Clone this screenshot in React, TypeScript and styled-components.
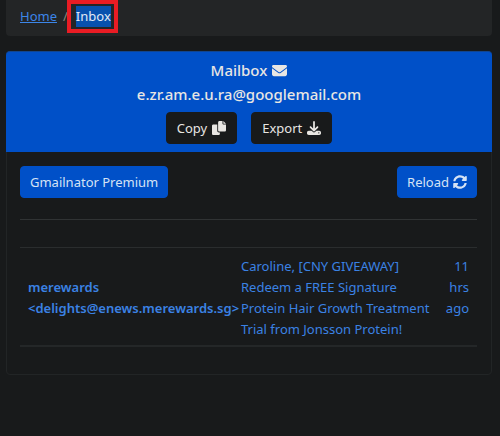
import React from "react";
import styled, { createGlobalStyle } from "styled-components";
import { FaDownload, FaEnvelope } from "react-icons/fa6";
import { FaSyncAlt } from "react-icons/fa";

const GlobalStyle = createGlobalStyle`
  * { box-sizing: border-box; }
  body {
    margin: 0;
    background: #181a1b;
    color: #e8e6e3;
    font: 13px/21px "Noto Sans", "Open Sans", sans-serif;
  }
`;

const Page = styled.div`
  padding: 0 8px 16px 6px;
`;

const Breadcrumb = styled.nav`
  display: flex;
  align-items: center;
  gap: 6px;
  height: 36px;
  padding: 0 14px 4px;
  background: #232526;
  color: #8d867b;
  border-radius: 0 0 4px 4px;
`;

const HomeLink = styled.a`
  color: #3c86e8;
`;

const Current = styled.span`
  position: relative;
  margin-left: 2px;
  background: #0751ae;
  color: #e0eaf5;
`;

const Highlight = styled.span`
  position: absolute;
  inset: -6px -7px -6px -9px;
  border: 4px solid #e91c24;
`;

const Card = styled.main`
  margin-top: 15px;
  border: 1px solid #222526;
  border-radius: 4px;
`;

const CardHeader = styled.header`
  display: flex;
  flex-direction: column;
  align-items: center;
  margin: -1px -1px 0;
  padding: 6px 14px 8px;
  border-top: 1px solid #12458f;
  border-radius: 4px 4px 0 0;
  background: #0050c8;
`;

const Title = styled.h1`
  display: flex;
  align-items: center;
  gap: 5px;
  margin: 0;
  font-size: 15px;
  line-height: 24px;
  font-weight: 500;
`;

const HeaderActions = styled.div`
  display: flex;
  gap: 14px;
  margin-top: 6px;
`;

const Button = styled.button<{ $dark?: boolean }>`
  display: inline-flex;
  align-items: center;
  gap: ${(p) => (p.$dark ? "5px" : "4px")};
  height: 32px;
  padding: 0 ${(p) => (p.$dark ? "10px" : "9px")};
  border: 1px solid ${(p) => (p.$dark ? "#181a1b" : "#0050c8")};
  border-radius: 4px;
  background: ${(p) => (p.$dark ? "#181a1b" : "#0050c8")};
  color: ${(p) => (p.$dark ? "#e8e6e3" : "#d5e3f5")};
  font: inherit;
  white-space: nowrap;
`;

const CardBody = styled.div`
  padding: 14px 14px 27px 13px;
`;

const Toolbar = styled.div`
  display: flex;
  justify-content: space-between;
`;

const MailTable = styled.table`
  width: 100%;
  margin-top: 21px;
  border-collapse: collapse;
  color: #3b82e4;
  border-top: 1px solid #303334;
  border-bottom: 2px solid #242728;
`;

const HeadCell = styled.th`
  height: 28px;
  padding: 0;
  border-bottom: 1px solid #2a2d2e;
`;

const Cell = styled.td`
  padding: 8px 0 5px;
`;

const SenderCell = styled(Cell)`
  width: 221px;
  padding-left: 8px;
  font-weight: 600;
`;

const TimeCell = styled(Cell)`
  width: 42px;
  padding-right: 8px;
  padding-left: 8px;
  text-align: right;
  vertical-align: top;
`;

const MailLink = styled.a`
  color: inherit;
  text-decoration: none;
`;

const CopyIcon = () => (
  <svg width="14" height="14" viewBox="0 0 512 512" fill="currentColor" aria-hidden="true">
    <path d="M384 96V0H272c-26.500 0-48 21.500-48 48v288c0 26.500 21.500 48 48 48h192c26.500 0 48-21.500 48-48V128h-96c-17.600 0-32-14.400-32-32zM416 0v96h96L416 0zM192 352V128H48c-26.500 0-48 21.500-48 48v288c0 26.500 21.500 48 48 48h192c26.500 0 48-21.500 48-48v-48h-32c-35.300 0-64-28.700-64-64z" />
  </svg>
);

const messages = [
  {
    name: "merewards",
    address: "<delights@enews.merewards.sg>",
    subject:
      "Caroline, [CNY GIVEAWAY] Redeem a FREE Signature Protein Hair Growth Treatment Trial from Jonsson Protein!",
    age: "11 hrs ago",
  },
];

export default function App() {
  return (
    <>
      <GlobalStyle />
      <Page>
        <Breadcrumb aria-label="Breadcrumb">
          <HomeLink href="#home">Home</HomeLink>
          <span>/</span>
          <Current aria-current="page">
            Inbox
            <Highlight />
          </Current>
        </Breadcrumb>
        <Card>
          <CardHeader>
            <Title>
              Mailbox <FaEnvelope size={15} />
            </Title>
            <Title as="div">e.zr.am.e.u.ra@googlemail.com</Title>
            <HeaderActions>
              <Button type="button" $dark>
                Copy <CopyIcon />
              </Button>
              <Button type="button" $dark>
                Export <FaDownload size={14} />
              </Button>
            </HeaderActions>
          </CardHeader>
          <CardBody>
            <Toolbar>
              <Button type="button">Gmailnator Premium</Button>
              <Button type="button">
                Reload <FaSyncAlt size={14} />
              </Button>
            </Toolbar>
            <MailTable>
              <thead>
                <tr>
                  <HeadCell aria-label="Sender" />
                  <HeadCell aria-label="Subject" />
                  <HeadCell aria-label="Received" />
                </tr>
              </thead>
              <tbody>
                {messages.map((m) => (
                  <tr key={m.address}>
                    <SenderCell>
                      <MailLink href="#message">
                        {m.name} {m.address}
                      </MailLink>
                    </SenderCell>
                    <Cell>
                      <MailLink href="#message">{m.subject}</MailLink>
                    </Cell>
                    <TimeCell>
                      <MailLink href="#message">{m.age}</MailLink>
                    </TimeCell>
                  </tr>
                ))}
              </tbody>
            </MailTable>
          </CardBody>
        </Card>
      </Page>
    </>
  );
}
